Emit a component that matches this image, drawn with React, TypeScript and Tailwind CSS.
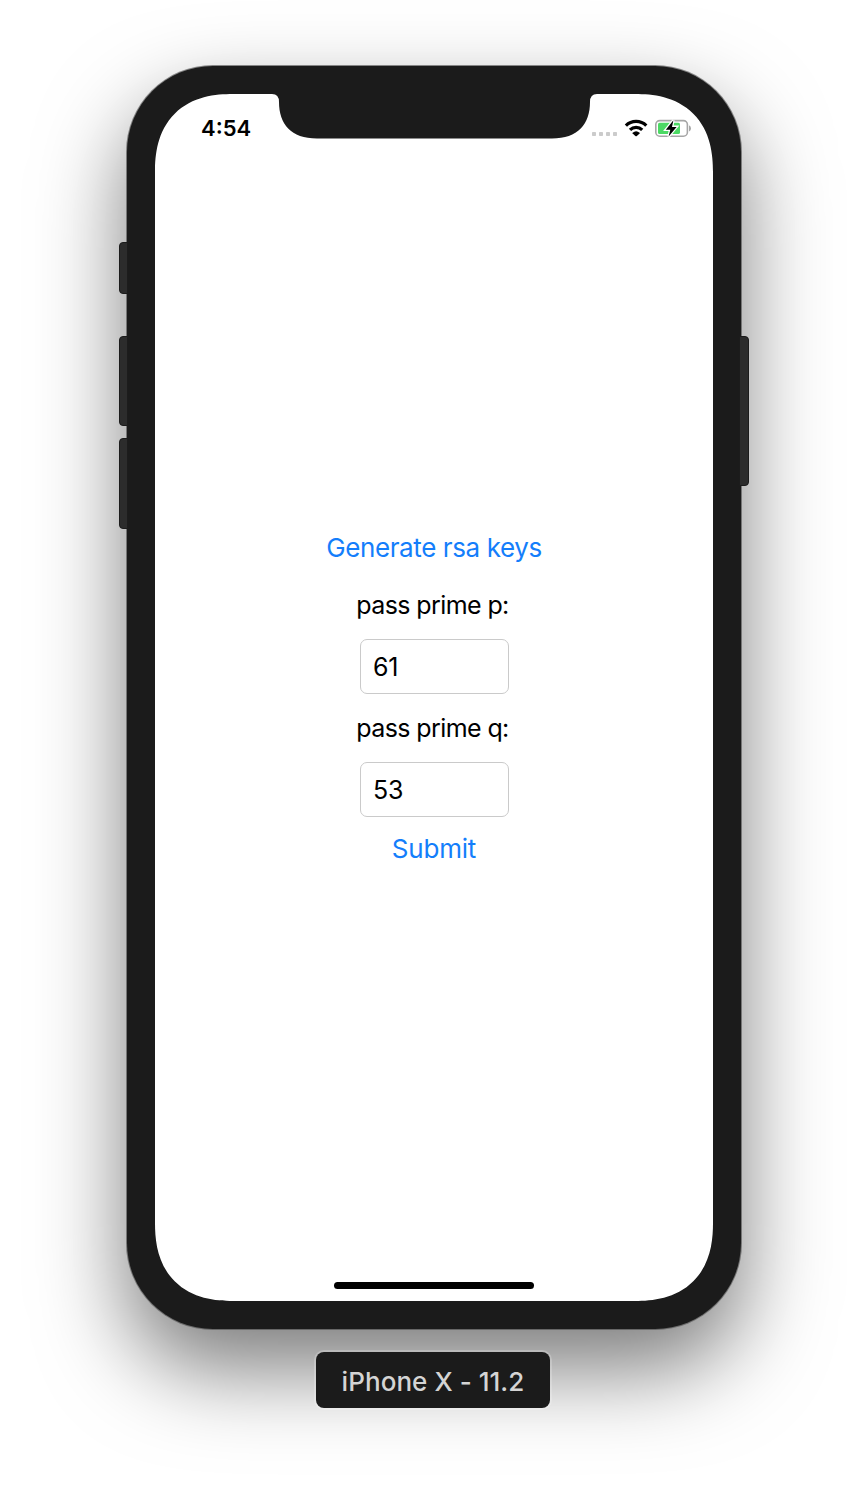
function StatusIcons() {
  return (
    <svg className="block h-[24px] w-[104px]" viewBox="590 116 104 24" fill="none">
      <g fill="#cbcbcb">
        <rect x="592" y="132" width="4" height="4" rx=".7" />
        <rect x="599" y="132" width="4" height="4" rx=".7" />
        <rect x="606" y="132" width="4" height="4" rx=".7" />
        <rect x="613" y="132" width="4" height="4" rx=".7" />
      </g>
      <g stroke="#000" strokeWidth="3.2">
        <path d="M625.9 125.6a14.6 14.6 0 0 1 20.4 0" />
        <path d="M630 129.9a8.8 8.8 0 0 1 12.2 0" />
      </g>
      <path d="M632.6 132.8a5.2 5.2 0 0 1 7 0q.3.4 0 .8l-2.8 2.4q-.7.6-1.4 0l-2.8-2.4q-.3-.4 0-.8z" fill="#000" />
      <rect x="655.8" y="120.6" width="31.6" height="15.6" rx="4" stroke="#a6a6a6" strokeWidth="1.6" />
      <rect x="658" y="122.8" width="22" height="11.2" rx="1.6" fill="#4cd964" />
      <path d="M689 125.3q2 1 2 3.1t-2 3.1z" fill="#a6a6a6" />
      <path d="M673.4 120.3 665.8 129.8h4.5l-1.7 6.7 8-9.6h-4.6z" fill="#000" stroke="#fff" strokeWidth="2.6" paintOrder="stroke" />
    </svg>
  );
}

function Notch() {
  return (
    <svg className="absolute left-[111px] top-[-1px] h-[47px] w-[336px]" viewBox="266 93 336 47">
      <path
        d="M266 93V94H272Q279 94 279 102C279 124 291 138.5 317 138.5H552C578 138.5 590 124 590 102Q590 94 597 94H602V93Z"
        fill="#1b1b1b"
      />
    </svg>
  );
}

function SideButton({ place }: { place: string }) {
  return <div className={`absolute border border-[#1c1c1c] bg-[#2c2c2c] ${place}`} />;
}

function PrimeField({ label, value }: { label: string; value: string }) {
  return (
    <label className="flex h-[123px] flex-col items-center">
      <span className="mr-[3px] h-[51px] pt-[2px] text-[25px] leading-[30px] tracking-[-0.6px]">{label}</span>
      <input
        className="ml-px h-[55px] w-[149px] rounded-[7px] border-[1.5px] border-[#cacaca] bg-white px-[12px] text-[25px] tracking-[-0.3px] text-black outline-none"
        defaultValue={value}
      />
    </label>
  );
}

export default function App() {
  return (
    <div className="flex h-[1492px] w-[868px] flex-col items-center overflow-hidden bg-white pt-[66px] font-['Inter','Liberation_Sans',sans-serif] text-black">
      <div className="relative h-[1263px] w-[614px] shrink-0 rounded-[86px] bg-[#1b1b1b] p-[28px] shadow-[0_0_0_1px_rgba(80,80,80,0.65),0_40px_88px_rgba(0,0,0,0.52)]">
        <SideButton place="left-[-8px] top-[176px] h-[52px] w-[9px] rounded-l-[4px]" />
        <SideButton place="left-[-8px] top-[270px] h-[90px] w-[9px] rounded-l-[4px]" />
        <SideButton place="left-[-8px] top-[372px] h-[91px] w-[9px] rounded-l-[4px]" />
        <SideButton place="right-[-8px] top-[270px] h-[150px] w-[10px] rounded-r-[4px]" />
        <div className="relative flex h-[1207px] w-[558px] flex-col rounded-[78px] bg-white [corner-shape:superellipse(1.25)]">
          <Notch />
          <div className="flex h-[46px] items-start justify-between pl-[46px] pr-[19px] pt-[22px]">
            <time className="-mt-px text-[22px] font-semibold leading-[26px]">4:54</time>
            <StatusIcons />
          </div>
          <main className="flex flex-1 flex-col items-center pt-[391px]">
            <button className="h-[57px] pb-[23px] text-[26px] leading-[34px] tracking-[-0.4px] text-[#147efb]">Generate rsa keys</button>
            <PrimeField label="pass prime p:" value="61" />
            <PrimeField label="pass prime q:" value="53" />
            <button className="-mt-[2px] text-[26px] leading-[34px] tracking-[-0.2px] text-[#147efb]">Submit</button>
          </main>
          <div className="mb-[12px] h-[7px] w-[200px] self-center rounded-full bg-black" />
        </div>
      </div>
      <div className="relative mr-[2px] mt-[23px] flex h-[56px] w-[234px] items-center justify-center rounded-[8px] bg-[#1b1b1b] pt-[3px] text-[26px] font-medium tracking-[0.05px] text-[#d4d4d4] shadow-[0_0_0_2px_rgba(255,255,255,0.22)]">
        iPhone X - 11.2
      </div>
    </div>
  );
}
